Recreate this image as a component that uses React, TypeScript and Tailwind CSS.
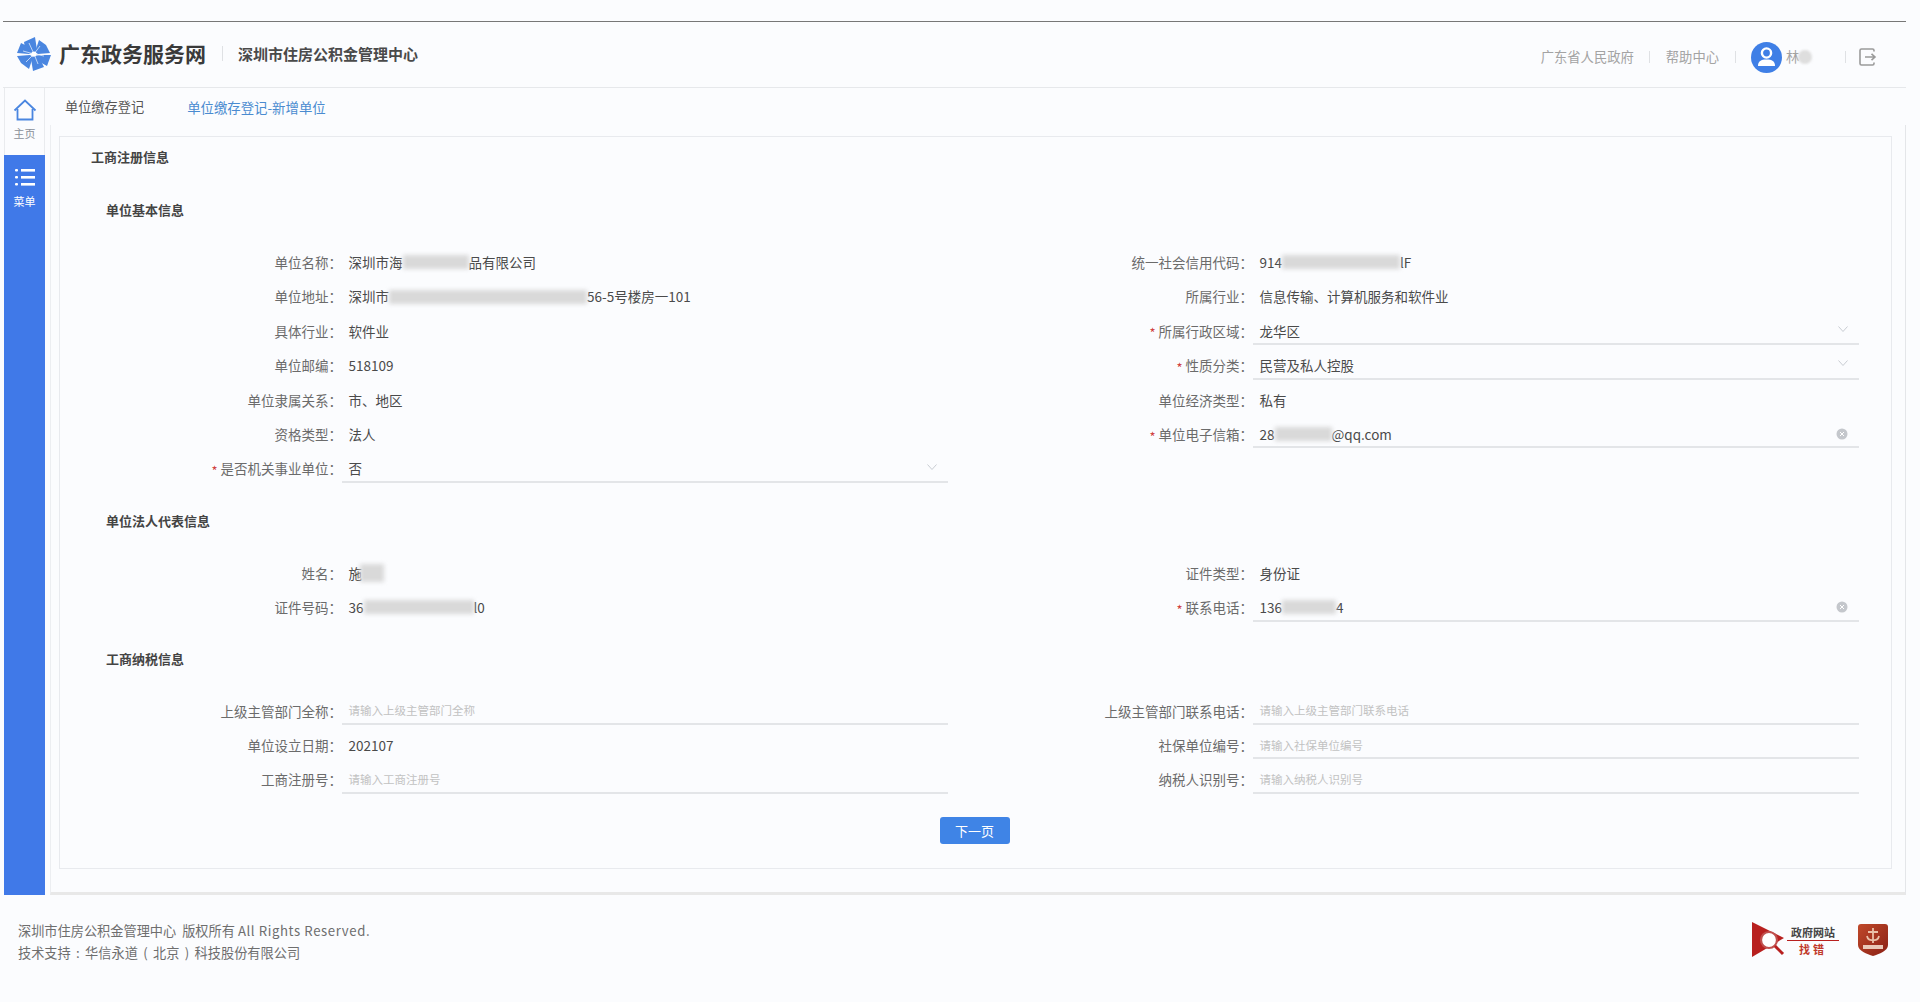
import React from "react";

const font = { fontFamily: '"Noto Sans CJK SC", "Noto Sans", sans-serif' };

function Blur({ w, h = 14, ml = 0 }: { w: number; h?: number; ml?: number }) {
  return (
    <span
      className="inline-block align-middle bg-[#d9d9d9] blur-[2px]"
      style={{ width: w, height: h, marginLeft: ml }}
    />
  );
}

function Chevron() {
  return (
    <svg width="12" height="8" viewBox="0 0 12 8" fill="none" className="mr-[10px] shrink-0 -translate-y-[2px]">
      <path d="M1.5 1.5 L6 6.5 L10.5 1.5" stroke="#c9cdd3" strokeWidth="1" />
    </svg>
  );
}

function Clear() {
  return (
    <svg width="12" height="12" viewBox="0 0 12 12" className="mr-[11px] shrink-0">
      <circle cx="6" cy="6" r="5.5" fill="#c4c7cc" />
      <path d="M4 4 L8 8 M8 4 L4 8" stroke="#fff" strokeWidth="1" />
    </svg>
  );
}

type ItemProps = {
  label: string;
  required?: boolean;
  line?: boolean;
  children?: React.ReactNode;
  right?: React.ReactNode;
  placeholder?: string;
};

function Item({ label, required, line, children, right, placeholder }: ItemProps) {
  return (
    <div className="flex h-[34.4px] items-start">
      <div className="w-[282px] h-[34.4px] flex items-center justify-end text-[13.5px] text-[#6b6b6b] whitespace-nowrap">
        {required && <span className="text-[#d0423f] text-[13px] mr-[3px] leading-none translate-y-[2px]">*</span>}
        {label}：
      </div>
      <div
        className={`w-[606px] pl-[6.5px] flex items-center justify-between text-[13.5px] text-[#4a4a4a] whitespace-nowrap ${
          line ? "h-[31.5px] pt-[5px] border-b-2 border-[#e3e5e8]" : "h-[34.4px]"
        }`}
      >
        {placeholder ? (
          <span className="text-[11.5px] text-[#c2c2c2]">{placeholder}</span>
        ) : (
          <span className="flex items-center">{children}</span>
        )}
        {right}
      </div>
    </div>
  );
}

function Section({ title, className }: { title: string; className: string }) {
  return <div className={`pl-[46px] text-[13px] font-bold text-[#444] leading-[20px] ${className}`}>{title}</div>;
}

function Logo() {
  return (
    <svg width="34" height="34" viewBox="0 0 34 34" className="shrink-0">
      <g fill="#4a86e0">
        <path d="M7 5 L18 0 L20 13 L17 16 L8 11 Z" />
        <path d="M22 3 L29 8 L33 16 L21 17 L18 15 Z" />
        <path d="M34 18 L30 29 L21 24 L18 19 L22 18 Z" />
        <path d="M27 30 L16 34 L14 22 L17 19 L24 24 Z" />
        <path d="M12 32 L4 26 L0 19 L13 18 L16 20 Z" />
        <path d="M0 16 L4 6 L12 10 L16 15 L12 17 Z" />
      </g>
      <g stroke="#dbe8fa" strokeWidth="0.8">
        <path d="M17 17 L23 9 M17 17 L27 19 M17 17 L21 27 M17 17 L9 25 M17 17 L6 14 M17 17 L12 6" />
      </g>
      <circle cx="17" cy="17" r="2.4" fill="#fff" />
    </svg>
  );
}

function Divider() {
  return <span className="inline-block w-px h-[12px] bg-[#dfe1e4]" />;
}

export default function App() {
  return (
    <div className="h-[1002px] w-[1920px] bg-[#fbfcfe] overflow-hidden" style={font}>
      <div className="pt-[21px] pl-[3px] pr-[14px]">
        {/* header */}
        <header className="h-[67px] border-t border-b border-t-[#777] border-b-[#e6e8eb] flex items-center pl-[14px] pr-[28px] pb-[2px]">
          <Logo />
          <span className="ml-[8px] text-[21px] font-bold text-[#3a3a3a]">广东政务服务网</span>
          <span className="ml-[16px] w-px h-[15px] bg-[#dfe1e4]" />
          <span className="ml-[15px] text-[15px] font-bold text-[#4a4a4a] translate-y-[1px]">深圳市住房公积金管理中心</span>
          <div className="ml-auto flex items-center text-[13.3px] text-[#a3a3a3] pt-[7px]">
            <span>广东省人民政府</span>
            <span className="mx-[15.5px] flex items-center"><Divider /></span>
            <span>帮助中心</span>
            <span className="mx-[15.5px] flex items-center"><Divider /></span>
            <svg width="31" height="31" viewBox="0 0 31 31" className="shrink-0">
              <circle cx="15.5" cy="15.5" r="15.5" fill="#3f7fe6" />
              <circle cx="15.5" cy="11" r="4.6" fill="none" stroke="#fff" strokeWidth="2.4" />
              <path d="M7 24 C7 19 10 17.5 15.5 17.5 C21 17.5 24 19 24 24 Z" fill="#fff" />
            </svg>
            <span className="ml-[4px] w-[59px] flex items-center">
              林
              <span className="inline-block w-[14px] h-[14px] rounded-full bg-[#dedede] blur-[1px] -ml-[1px]" />
            </span>
            <Divider />
            <svg width="20" height="20" viewBox="0 0 20 20" fill="none" stroke="#9a9a9a" strokeWidth="1.6" className="ml-[12px]">
              <path d="M16 4.5 V3.5 A1.5 1.5 0 0 0 14.5 2 H3.5 A1.5 1.5 0 0 0 2 3.5 V16.5 A1.5 1.5 0 0 0 3.5 18 H14.5 A1.5 1.5 0 0 0 16 16.5 V15.5" />
              <path d="M7 10 H17 M13.5 6.8 L17 10 L13.5 13.2" />
            </svg>
          </div>
        </header>

        {/* body */}
        <div className="flex h-[808px]">
          <aside className="w-[41px] ml-px flex flex-col shrink-0">
            <div className="h-[67px] border-l border-r border-[#e9ebee] flex flex-col items-center pt-[11px]">
              <svg width="24" height="22" viewBox="0 0 24 22" fill="none" stroke="#4a86e0" strokeWidth="1.8">
                <path d="M1.5 11.5 L12 1.5 L22.5 11.5" />
                <path d="M4.5 10 V20.5 H19.5 V10" />
              </svg>
              <span className="text-[11px] leading-[14px] mt-[5px] text-[#8a9099]">主页</span>
            </div>
            <div className="h-[740px] bg-[#4079e8] flex flex-col items-center pt-[13px]">
              <svg width="20" height="19" viewBox="0 0 20 19" fill="#fff">
                <rect x="0" y="1" width="3" height="2.6" rx="1" />
                <rect x="0" y="8" width="3" height="2.6" rx="1" />
                <rect x="0" y="15" width="3" height="2.6" rx="1" />
                <rect x="6" y="1" width="14" height="2.6" />
                <rect x="6" y="8" width="14" height="2.6" />
                <rect x="6" y="15" width="14" height="2.6" />
              </svg>
              <span className="text-[11px] leading-[14px] mt-[7px] text-white">菜单</span>
            </div>
          </aside>

          <main className="flex-1 ml-[5px] flex flex-col h-[808px]">
            <div className="h-[37px] flex items-center pl-[15px] pt-[2px] pb-[1px]">
              <span className="text-[13.2px] text-[#555]">单位缴存登记</span>
              <span className="ml-[43px] text-[13.4px] text-[#4a8bd0]">单位缴存登记-新增单位</span>
            </div>
            <div className="h-[770px] border-l border-r border-b-[3px] border-l-[#eceef1] border-r-[#e4e6e9] border-b-[#e8e8e8] pl-[8px] pr-[13px]">
              <div className="h-[733px] mt-[11px] w-[1833px] border border-[#e8eaee]">
                <div className="pl-[31px] pt-[10px] text-[13px] font-bold text-[#444] leading-[20px]">工商注册信息</div>

                <Section title="单位基本信息" className="mt-[33px]" />
                <div className="grid grid-cols-[911px_910px] mt-[25px]">
                  <Item label="单位名称">深圳市海<Blur w={66} />品有限公司</Item>
                  <Item label="统一社会信用代码">914<Blur w={118} />lF</Item>
                  <Item label="单位地址">深圳市<Blur w={198} />56-5号楼房一101</Item>
                  <Item label="所属行业">信息传输、计算机服务和软件业</Item>
                  <Item label="具体行业">软件业</Item>
                  <Item label="所属行政区域" required line right={<Chevron />}>龙华区</Item>
                  <Item label="单位邮编">518109</Item>
                  <Item label="性质分类" required line right={<Chevron />}>民营及私人控股</Item>
                  <Item label="单位隶属关系">市、地区</Item>
                  <Item label="单位经济类型">私有</Item>
                  <Item label="资格类型">法人</Item>
                  <Item label="单位电子信箱" required line right={<Clear />}>
                    28<Blur w={57} />@qq.com
                  </Item>
                  <Item label="是否机关事业单位" required line right={<Chevron />}>否</Item>
                </div>

                <Section title="单位法人代表信息" className="mt-[25px]" />
                <div className="grid grid-cols-[911px_910px] mt-[25px]">
                  <Item label="姓名">施<Blur w={24} h={18} ml={-2} /></Item>
                  <Item label="证件类型">身份证</Item>
                  <Item label="证件号码">36<Blur w={110} />l0</Item>
                  <Item label="联系电话" required line right={<Clear />}>136<Blur w={54} />4</Item>
                </div>

                <Section title="工商纳税信息" className="mt-[24px]" />
                <div className="grid grid-cols-[911px_910px] mt-[25px]">
                  <Item label="上级主管部门全称" line placeholder="请输入上级主管部门全称" />
                  <Item label="上级主管部门联系电话" line placeholder="请输入上级主管部门联系电话" />
                  <Item label="单位设立日期">202107</Item>
                  <Item label="社保单位编号" line placeholder="请输入社保单位编号" />
                  <Item label="工商注册号" line placeholder="请输入工商注册号" />
                  <Item label="纳税人识别号" line placeholder="请输入纳税人识别号" />
                </div>

                <div className="flex justify-center mt-[20px] pr-[2px]">
                  <button className="w-[70px] h-[27px] rounded-[3px] bg-[#3f84e6] text-white text-[13px] leading-none">下一页</button>
                </div>
              </div>
            </div>
          </main>
        </div>

        {/* footer */}
        <footer className="flex items-start justify-between pt-[24px] pl-[15px] pr-[17px]">
          <div className="text-[13.2px] leading-[22px] text-[#6e6e6e]">
            <div>
              深圳市住房公积金管理中心&nbsp;&nbsp;版权所有 <span className="tracking-[0.6px]">All Rights Reserved.</span>
            </div>
            <div className="[word-spacing:2.4px]">技术支持 : 华信永道 ( 北京 ) 科技股份有限公司</div>
          </div>
          <div className="flex items-center pt-[1px]">
            <svg width="34" height="38" viewBox="0 0 34 38" className="shrink-0">
              <path d="M0 1 L32 17 L0 36 Z" fill="#b8201f" />
              <circle cx="17" cy="19" r="8" fill="#fff" stroke="#c0504d" strokeWidth="2.2" />
              <path d="M23 25 L31 33" stroke="#b8201f" strokeWidth="3" />
            </svg>
            <div className="ml-[1px] w-[52px] flex flex-col items-center">
              <span className="text-[11px] font-bold leading-[14px] text-[#444] whitespace-nowrap">政府网站</span>
              <span className="w-full h-px bg-[#b8201f] mt-[1px]" />
              <span className="text-[11px] font-bold leading-[14px] text-[#c0392b] tracking-[3px] mt-[1px]">找错</span>
            </div>
            <svg width="32" height="34" viewBox="0 0 32 34" className="ml-[18px] shrink-0">
              <defs>
                <linearGradient id="eb" x1="0" y1="0" x2="1" y2="1">
                  <stop offset="0" stopColor="#c0492a" />
                  <stop offset="1" stopColor="#8a2015" />
                </linearGradient>
              </defs>
              <path d="M4 1 H28 A3 3 0 0 1 31 4 V22 C31 28 22 31 16 33 C10 31 1 28 1 22 V4 A3 3 0 0 1 4 1 Z" fill="url(#eb)" />
              <path d="M16 5 V20 M11 9 H21 M10 13 Q11 18 16 17 Q21 18 22 13" stroke="#eac0a8" strokeWidth="1.8" fill="none" />
              <rect x="6" y="22" width="20" height="4" fill="#e9c9b8" />
            </svg>
          </div>
        </footer>
      </div>
    </div>
  );
}
